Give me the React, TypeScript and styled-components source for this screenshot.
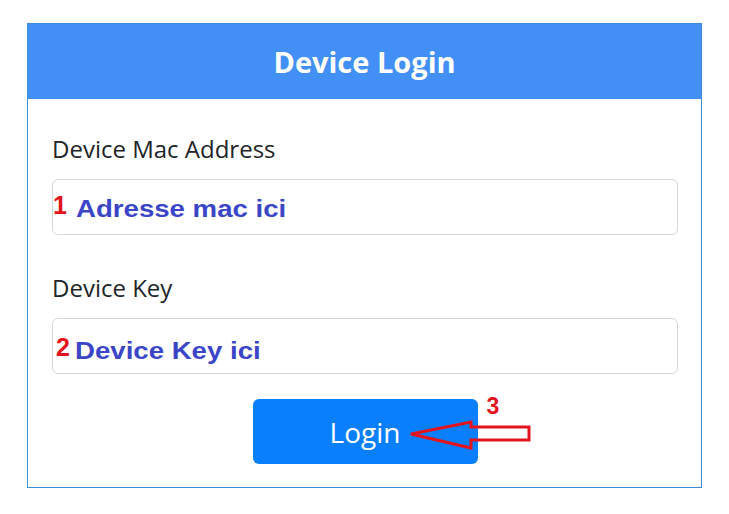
import React from 'react';
import styled, { createGlobalStyle } from 'styled-components';

const GlobalStyle = createGlobalStyle`
  html, body {
    margin: 0;
    padding: 0;
    background: #ffffff;
  }

  body {
    font-family: 'Open Sans', 'Noto Sans', Arial, sans-serif;
  }
`;

const StyledCard = styled.div`
  box-sizing: border-box;
  width: 675px;
  margin: 23px auto 0;
  border: 1px solid #3f8bd6;
  background: #ffffff;
`;

const StyledHeader = styled.h1`
  margin: 0;
  height: 75px;
  display: flex;
  align-items: center;
  justify-content: center;
  background: #4290f5;
  color: #ffffff;
  font-size: 29px;
  font-weight: 700;
`;

const StyledBody = styled.form`
  display: flex;
  flex-direction: column;
  padding: 33px 23px 23px 24px;
`;

const StyledGroup = styled.div<{ $gap: number }>`
  display: flex;
  flex-direction: column;
  margin-bottom: ${({ $gap }) => $gap}px;
`;

const StyledLabel = styled.label`
  font-size: 24px;
  line-height: 34px;
  color: #212529;
  margin-bottom: 13px;
`;

const StyledField = styled.div`
  position: relative;
`;

const StyledInput = styled.input`
  box-sizing: border-box;
  display: block;
  width: 100%;
  height: 56px;
  border: 1px solid #d3d7db;
  border-radius: 6px;
  background: #ffffff;
  outline: none;
`;

const StyledNote = styled.div<{ $top: number; $left: number }>`
  position: absolute;
  left: ${({ $left }) => $left}px;
  top: ${({ $top }) => $top}px;
  display: flex;
  align-items: baseline;
  font-family: 'Liberation Sans', Arial, sans-serif;
  font-weight: 700;
  font-size: 23px;
  line-height: 23px;
  pointer-events: none;
`;

const StyledNumber = styled.span`
  color: #e3141d;
  font-family: 'Liberation Sans', Arial, sans-serif;
  font-weight: 700;
  font-size: 25px;
  position: relative;
  top: -3px;
`;

const StyledHint = styled.span<{ $offset: number }>`
  display: inline-block;
  margin-left: ${({ $offset }) => $offset}px;
  color: #3a45c8;
  transform: scaleX(1.2);
  transform-origin: left center;
  white-space: nowrap;
`;

const StyledActions = styled.div`
  display: flex;
  justify-content: center;
`;

const StyledButtonWrap = styled.div`
  position: relative;
`;

const StyledButton = styled.button`
  width: 225px;
  height: 65px;
  border: none;
  border-radius: 6px;
  background: #0a7ffb;
  color: #ffffff;
  font-family: 'Open Sans', 'Noto Sans', Arial, sans-serif;
  font-size: 28px;
  padding: 0;
`;

const StyledArrow = styled.svg`
  position: absolute;
  left: 154px;
  top: 19px;
  overflow: visible;
`;

const StyledStep = styled.span`
  position: absolute;
  left: 234px;
  top: -4px;
  color: #e3141d;
  font-family: 'Liberation Sans', Arial, sans-serif;
  font-weight: 700;
  font-size: 23px;
  line-height: 23px;
`;

const App = () => {
  const fields = [
    { id: 'mac', label: 'Device Mac Address', num: '1', hint: 'Adresse mac ici', top: 18, left: 1, offset: 9, gap: 36 },
    { id: 'key', label: 'Device Key', num: '2', hint: 'Device Key ici', top: 21, left: 4, offset: 5, gap: 25 },
  ];

  return (
    <>
      <GlobalStyle />
      <StyledCard>
        <StyledHeader>Device Login</StyledHeader>
        <StyledBody onSubmit={(e) => e.preventDefault()}>
          {fields.map((f) => (
            <StyledGroup key={f.id} $gap={f.gap}>
              <StyledLabel htmlFor={f.id}>{f.label}</StyledLabel>
              <StyledField>
                <StyledInput id={f.id} type='text' />
                <StyledNote $top={f.top} $left={f.left}>
                  <StyledNumber>{f.num}</StyledNumber>
                  <StyledHint $offset={f.offset}>{f.hint}</StyledHint>
                </StyledNote>
              </StyledField>
            </StyledGroup>
          ))}

          <StyledActions>
            <StyledButtonWrap>
              <StyledButton type='submit'>Login</StyledButton>
              <StyledStep>3</StyledStep>
              <StyledArrow width='128' height='34' viewBox='0 0 128 34'>
                <path
                  d='M4 16 L64 4 L64 9 L122 9 L122 22 L64 22 L64 30 Z'
                  fill='none'
                  stroke='#e3141d'
                  strokeWidth='3'
                  strokeLinejoin='miter'
                />
              </StyledArrow>
            </StyledButtonWrap>
          </StyledActions>
        </StyledBody>
      </StyledCard>
    </>
  );
};

export default App;
